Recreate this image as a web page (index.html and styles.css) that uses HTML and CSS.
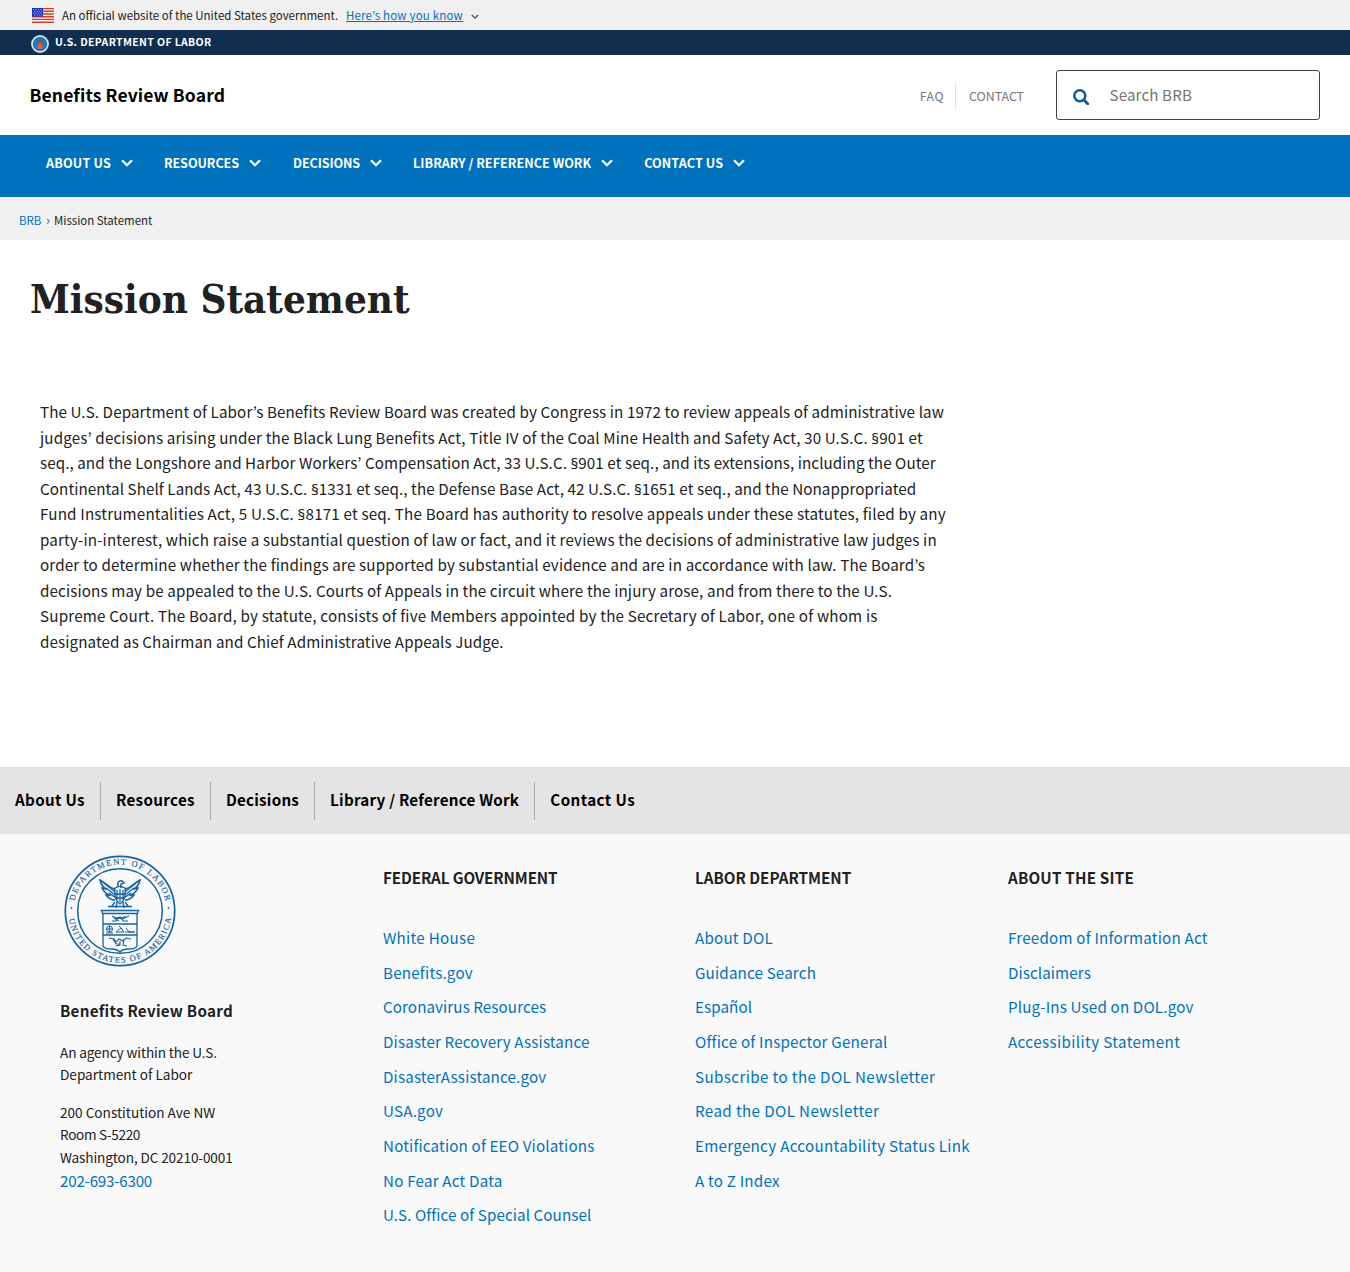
FILE: index.html
```html
<!DOCTYPE html>
<html lang="en">
<head>
<meta charset="utf-8">
<title>Mission Statement | Benefits Review Board</title>
<link rel="stylesheet" href="styles.css">
</head>
<body>
<div class="gov-banner">
  <svg class="flag" viewBox="0 0 22 15" aria-hidden="true">
    <rect width="22" height="15" fill="#f4f1f1"/>
    <path d="M0 .6h22M0 3.3h22M0 6h22M0 8.7h22M0 11.4h22M0 14.2h22" stroke="#db3e1f" stroke-width="1.4"/>
    <rect width="11" height="8.6" fill="#1e33b1"/>
    <path d="M1.2 1.6h9M2.2 3.4h8M1.2 5.2h9M2.2 7h8" stroke="#c8d2f5" stroke-width=".9" stroke-dasharray="1 1.3"/>
  </svg>
  <span class="gov-text">An official website of the United States government.</span>
  <a class="gov-link" href="#">Here’s how you know</a>
  <svg class="gov-chevron" viewBox="0 0 8 6" aria-hidden="true"><path d="M.8 1l3.2 3.200L7.200 1" fill="none" stroke="#2c5572" stroke-width="1.300"/></svg>
</div>
<div class="dol-bar">
  <svg class="dol-seal" viewBox="0 0 18 18" aria-hidden="true">
    <circle cx="9" cy="9" r="8" fill="#1272b8" stroke="#d3dde4" stroke-width="1.900"/>
    <circle cx="9" cy="9" r="5.800" fill="#1681c8"/>
    <path d="M5.800 5l1.700 1.300L9 3.800l1.500 2.500L12.200 5l-.7 5h-5z" fill="#75603a"/>
    <path d="M6.600 9h4.800v4.300L9 14.400l-2.400-1.100z" fill="#ef5a33"/>
    <path d="M8.200 6h1.600v3.500H8.200z" fill="#e4502c"/>
  </svg>
  <span class="dol-name">U.S. DEPARTMENT OF LABOR</span>
</div>
<header class="site-header">
  <a class="site-name" href="#">Benefits Review Board</a>
  <div class="header-tools">
    <a class="tool tool-faq" href="#">FAQ</a>
    <a class="tool tool-contact" href="#">CONTACT</a>
    <div class="search">
      <svg class="search-icon" viewBox="0 0 16 16" aria-hidden="true"><circle cx="6.800" cy="6.800" r="5.500" fill="none" stroke="#0d5a9c" stroke-width="2.500"/><path d="M10.700 10.700l4 4" stroke="#0d5a9c" stroke-width="3" stroke-linecap="round"/></svg>
      <span class="search-text">Search BRB</span>
    </div>
  </div>
</header>
<nav class="main-nav">
  <a class="nav-item about-us" href="#"><span>ABOUT US</span><svg viewBox="0 0 12 8"><path d="M1 1.200l5 5 5-5"/></svg></a>
  <a class="nav-item resources" href="#"><span>RESOURCES</span><svg viewBox="0 0 12 8"><path d="M1 1.200l5 5 5-5"/></svg></a>
  <a class="nav-item decisions" href="#"><span>DECISIONS</span><svg viewBox="0 0 12 8"><path d="M1 1.200l5 5 5-5"/></svg></a>
  <a class="nav-item library" href="#"><span>LIBRARY / REFERENCE WORK</span><svg viewBox="0 0 12 8"><path d="M1 1.200l5 5 5-5"/></svg></a>
  <a class="nav-item contact-us" href="#"><span>CONTACT US</span><svg viewBox="0 0 12 8"><path d="M1 1.200l5 5 5-5"/></svg></a>
</nav>
<div class="breadcrumb"><a href="#">BRB</a><span class="sep">›</span><span class="crumb">Mission Statement</span></div>
<main>
  <h1>Mission Statement</h1>
  <p class="mission"><span>The U.S. Department of Labor’s Benefits Review Board was created by Congress in 1972 to review appeals of administrative law</span><br>
<span>judges’ decisions arising under the Black Lung Benefits Act, Title IV of the Coal Mine Health and Safety Act, 30 U.S.C. <i>§</i>901 et</span><br>
<span>seq., and the Longshore and Harbor Workers’ Compensation Act, 33 U.S.C. <i>§</i>901 et seq., and its extensions, including the Outer</span><br>
<span>Continental Shelf Lands Act, 43 U.S.C. <i>§</i>1331 et seq., the Defense Base Act, 42 U.S.C. <i>§</i>1651 et seq., and the Nonappropriated</span><br>
<span>Fund Instrumentalities Act, 5 U.S.C. <i>§</i>8171 et seq. The Board has authority to resolve appeals under these statutes, filed by any</span><br>
<span>party-in-interest, which raise a substantial question of law or fact, and it reviews the decisions of administrative law judges in</span><br>
<span>order to determine whether the findings are supported by substantial evidence and are in accordance with law. The Board’s</span><br>
<span>decisions may be appealed to the U.S. Courts of Appeals in the circuit where the injury arose, and from there to the U.S.</span><br>
<span>Supreme Court. The Board, by statute, consists of five Members appointed by the Secretary of Labor, one of whom is</span><br>
<span>designated as Chairman and Chief Administrative Appeals Judge.</span></p>
</main>
<nav class="footer-nav">
  <a href="#">About Us</a><a href="#">Resources</a><a href="#">Decisions</a><a href="#">Library / Reference Work</a><a href="#">Contact Us</a>
</nav>
<footer class="footer">
  <section class="agency">
    <svg class="seal" viewBox="0 0 112 112" role="img" aria-label="Department of Labor seal">
      <defs>
        <path id="arc-top" d="M9.500 56a46.500 46.500 0 0 1 93 0"/>
        <path id="arc-bottom" d="M4.300 56a51.700 51.700 0 0 0 103.400 0"/>
      </defs>
      <g class="line">
        <circle cx="56" cy="56" r="54.700" stroke-width="1.700"/>
        <circle cx="56" cy="56" r="42.300" stroke-width="1.500"/>
        <path d="M54 31c-1-3 1-6 4-5l2 2-3 1v4M51 34c-6-1-9-6-15-9 1 5 3 7 6 9-2 0-3-1-4-1 2 4 4 6 8 7-2 1-3 0-4 0 3 4 6 5 9 5M61 34c6-1 9-6 15-9-1 5-3 7-6 9 2 0 3-1 4-1-2 4-4 6-8 7 2 1 3 0 4 0-3 4-6 5-9 5" stroke-width="1.600"/>
        <path d="M51 33c-1 8 0 13 5 16 5-3 6-8 5-16-3-2-7-2-10 0zM53 35v10M56 34v13M59 35v10M51 39h10M51 43h10M40 28l11 9M42 33l9 7M72 28l-11 9M70 33l-9 7M45 38l7 5M67 38l-7 5" stroke-width="1.300"/>
        <path d="M51 47l-3 4M61 47l3 4M44 51.500h24M53 47l-1 6M59 47l1 6" stroke-width="1.400"/>
        <path d="M37.500 55.500h37l-1 3H38.500zM39 58.500V91c1 3 5 3 9 3 4 0 6 1 8 3 2-2 4-3 8-3 4 0 8 0 9-3V58.500M39 69h34M39 80h34" stroke-width="1.300"/>
        <path d="M48 61l4 2 4-1 4 1 5-2M48 66h4l2-3 4 1 1 2h5M50 63l5 3M61 61l-3 4" stroke-width="1.200"/>
        <circle cx="45.500" cy="74" r="3"/><path d="M42 74h7M45.500 70.500v7M42 78h7M52 77l5-4 3 4zM62 73l3 4h5M61 77h10M55 71l4 4" stroke-width="1"/>
        <path d="M45 83l5 1 2 3 3-3 4 2 3-3 5 1M49 84l3 5h4M56 86v4l-4 1M60 84l-1 6 4 1" stroke-width="1.100"/>
      </g>
      <g class="seal-text">
        <text><textPath href="#arc-top" startOffset="10" textLength="126" lengthAdjust="spacing">DEPARTMENT OF LABOR</textPath></text>
        <text><textPath href="#arc-bottom" startOffset="8" textLength="147" lengthAdjust="spacing">UNITED STATES OF AMERICA</textPath></text>
      </g>
      <circle cx="7.500" cy="53" r=".9" fill="#16639f"/><circle cx="104.500" cy="53" r=".9" fill="#16639f"/>
    </svg>
    <h2>Benefits Review Board</h2>
    <p class="about"><span class="trim-1">An agency within the U.S.</span><br>Department of Labor</p>
    <address>200 Constitution Ave NW<br><span class="trim-3">Room S-5220</span><br><span class="trim-1">Washington, DC 20210-0001</span></address>
    <a class="phone trim-2" href="#">202-693-6300</a>
  </section>
  <section class="links">
    <h3 class="trim-1">FEDERAL GOVERNMENT</h3>
    <ul>
      <li><a class="open-3" href="#">White House</a></li>
      <li><a class="open-2" href="#">Benefits.gov</a></li>
      <li><a class="open-1" href="#">Coronavirus Resources</a></li>
      <li><a href="#">Disaster Recovery Assistance</a></li>
      <li><a href="#">DisasterAssistance.gov</a></li>
      <li><a class="open-2" href="#">USA.gov</a></li>
      <li><a href="#">Notification of EEO Violations</a></li>
      <li><a class="open-2" href="#">No Fear Act Data</a></li>
      <li><a class="open-1" href="#">U.S. Office of Special Counsel</a></li>
    </ul>
  </section>
  <section class="links">
    <h3>LABOR DEPARTMENT</h3>
    <ul>
      <li><a class="open-2" href="#">About DOL</a></li>
      <li><a href="#">Guidance Search</a></li>
      <li><a class="open-1" href="#">Español</a></li>
      <li><a class="open-2" href="#">Office of Inspector General</a></li>
      <li><a class="open-4" href="#">Subscribe to the DOL Newsletter</a></li>
      <li><a class="open-4" href="#">Read the DOL Newsletter</a></li>
      <li><a class="open-3" href="#">Emergency Accountability Status Link</a></li>
      <li><a class="open-2" href="#">A to Z Index</a></li>
    </ul>
  </section>
  <section class="links">
    <h3 class="open-2">ABOUT THE SITE</h3>
    <ul>
      <li><a class="open-2" href="#">Freedom of Information Act</a></li>
      <li><a class="open-1" href="#">Disclaimers</a></li>
      <li><a href="#">Plug-Ins Used on DOL.gov</a></li>
      <li><a class="open-4" href="#">Accessibility Statement</a></li>
    </ul>
  </section>
</footer>
</body>
</html>
```
FILE: styles.css
```css
* { box-sizing: border-box; }
body {
  margin: 0;
  background: #fff;
  color: #212121;
  font-family: "Noto Sans CJK JP", "Noto Sans CJK SC", sans-serif;
  font-size: 15.2px;
  white-space: nowrap;
}
a { color: #0071bc; text-decoration: none; }
p, h1, h2, h3, ul { margin: 0; padding: 0; }
svg { display: block; flex: none; }

.gov-banner { display: flex; align-items: center; height: 30px; padding-left: 32px; background: #f0f0f0; font-size: 11.500px; line-height: 30px; }
.flag { width: 22px; height: 15px; margin-right: 8px; }
.gov-text { width: 276px; }
.gov-link { width: 117px; margin-left: 8px; letter-spacing: .18px; text-decoration: underline; }
.gov-chevron { width: 8px; height: 6px; margin: 3px 0 0 8px; }

.dol-bar { display: flex; height: 25px; padding-left: 31px; background: #112e51; color: #fff; font-size: 10.500px; font-weight: 700; letter-spacing: .36px; line-height: 23px; }
.dol-seal { width: 18px; height: 18px; margin: 5px 6px 0 0; }

.site-header { display: flex; justify-content: space-between; align-items: center; height: 80px; padding: 0 30px; }
.site-name { margin: -2px 0 0 -.5px; color: #000; font-size: 17.500px; font-weight: 700; letter-spacing: .12px; }
.header-tools { display: flex; align-items: center; }
.tool { height: 24px; margin-top: 2px; color: #757575; font-size: 12.400px; line-height: 25px; }
.tool-faq { padding-right: 11px; border-right: 1px solid #dedede; letter-spacing: .4px; }
.tool-contact { padding-left: 13px; margin-right: 32px; }
.search { display: flex; align-items: center; width: 264px; height: 50px; padding-left: 16px; border: 1px solid #444; border-radius: 3px; color: #757575; letter-spacing: .1px; }
.search-icon { width: 16px; height: 16px; margin: 4px 20.500px 0 0; }
.search-text { margin-top: -2px; }

.main-nav { display: flex; height: 62px; padding-left: 46px; background: #0071bc; }
.nav-item { display: flex; align-items: center; height: 56px; color: #fff; font-size: 12.600px; font-weight: 700; }
.nav-item span { margin-top: -2px; }
.nav-item svg { width: 12px; height: 8px; margin: 0 31px 0 10px; }
.nav-item path { fill: none; stroke: #fff; stroke-width: 2.300; }
.about-us { letter-spacing: .16px; }
.resources { letter-spacing: -.07px; }
.resources svg { margin-right: 32px; }
.decisions { letter-spacing: -.13px; }
.library { letter-spacing: .03px; }
.contact-us { letter-spacing: .09px; }

.breadcrumb { display: flex; height: 43px; padding: 3px 0 0 19px; background: #f0f0f0; font-size: 11.450px; line-height: 40px; }
.breadcrumb a { width: 23px; }
.sep { width: 12px; padding-left: 4px; color: #5b616b; font-size: 13px; line-height: 39px; }

main { height: 527px; }
h1 { padding: 31px 0 0 30px; font: 700 40px/56px "DejaVu Serif Condensed", "DejaVu Serif", serif; font-stretch: condensed; }
.mission { padding: 72px 0 0 40px; line-height: 25.500px; letter-spacing: .15px; }
.mission i { font-family: "Noto Sans", sans-serif; font-style: normal; line-height: 1; }
.mission span:nth-of-type(1) { letter-spacing: .1px; }
.mission span:nth-of-type(3) { letter-spacing: .077px; }
.mission span:nth-of-type(4) { letter-spacing: .075px; }
.mission span:nth-of-type(5) { letter-spacing: .17px; }
.mission span:nth-of-type(8) { letter-spacing: .124px; }
.mission span:nth-of-type(9) { letter-spacing: .19px; }
.mission span:nth-of-type(10) { letter-spacing: .09px; }

.footer-nav { display: flex; align-items: flex-start; height: 67px; padding-top: 15px; background: #e4e4e4; font-weight: 700; letter-spacing: .33px; line-height: 35px; }
.footer-nav a { height: 38px; padding: 0 15px; border-right: 1px solid #aaa; color: #000; }
.footer-nav a:nth-child(3), .footer-nav a:nth-child(4) { letter-spacing: .22px; }
.footer-nav a:last-child { border: 0; letter-spacing: .42px; }

.footer { display: grid; grid-template-columns: 323px 312px 313px 1fr; height: 438px; padding-left: 60px; background: #f9f9f9; }
.seal { width: 112px; height: 112px; margin: 20.500px 0 0 4px; }
.seal .line { fill: none; stroke: #16639f; }
.seal-text { fill: #16639f; stroke: #16639f; stroke-width: .15; font: 8.400px "Liberation Serif", serif; }
.agency h2 { margin-top: 28.500px; font-size: 15.200px; letter-spacing: .26px; line-height: 30px; }
.about, address { font-size: 13.600px; font-style: normal; line-height: 22.500px; }
.about { margin-top: 15.500px; }
address { margin-top: 15px; }
.phone { display: block; margin-top: -.5px; line-height: 24px; }
.links h3 { margin-top: 29px; font-size: 15.200px; line-height: 28px; }
.links ul { margin-top: 29px; list-style: none; letter-spacing: .15px; line-height: 34.650px; }

.trim-1 { letter-spacing: -.12px; }
.trim-2 { letter-spacing: -.23px; }
.trim-3 { letter-spacing: -.34px; }
.open-1 { letter-spacing: .08px; }
.open-2 { letter-spacing: .2px; }
.open-3 { letter-spacing: .28px; }
.open-4 { letter-spacing: .38px; }
```
